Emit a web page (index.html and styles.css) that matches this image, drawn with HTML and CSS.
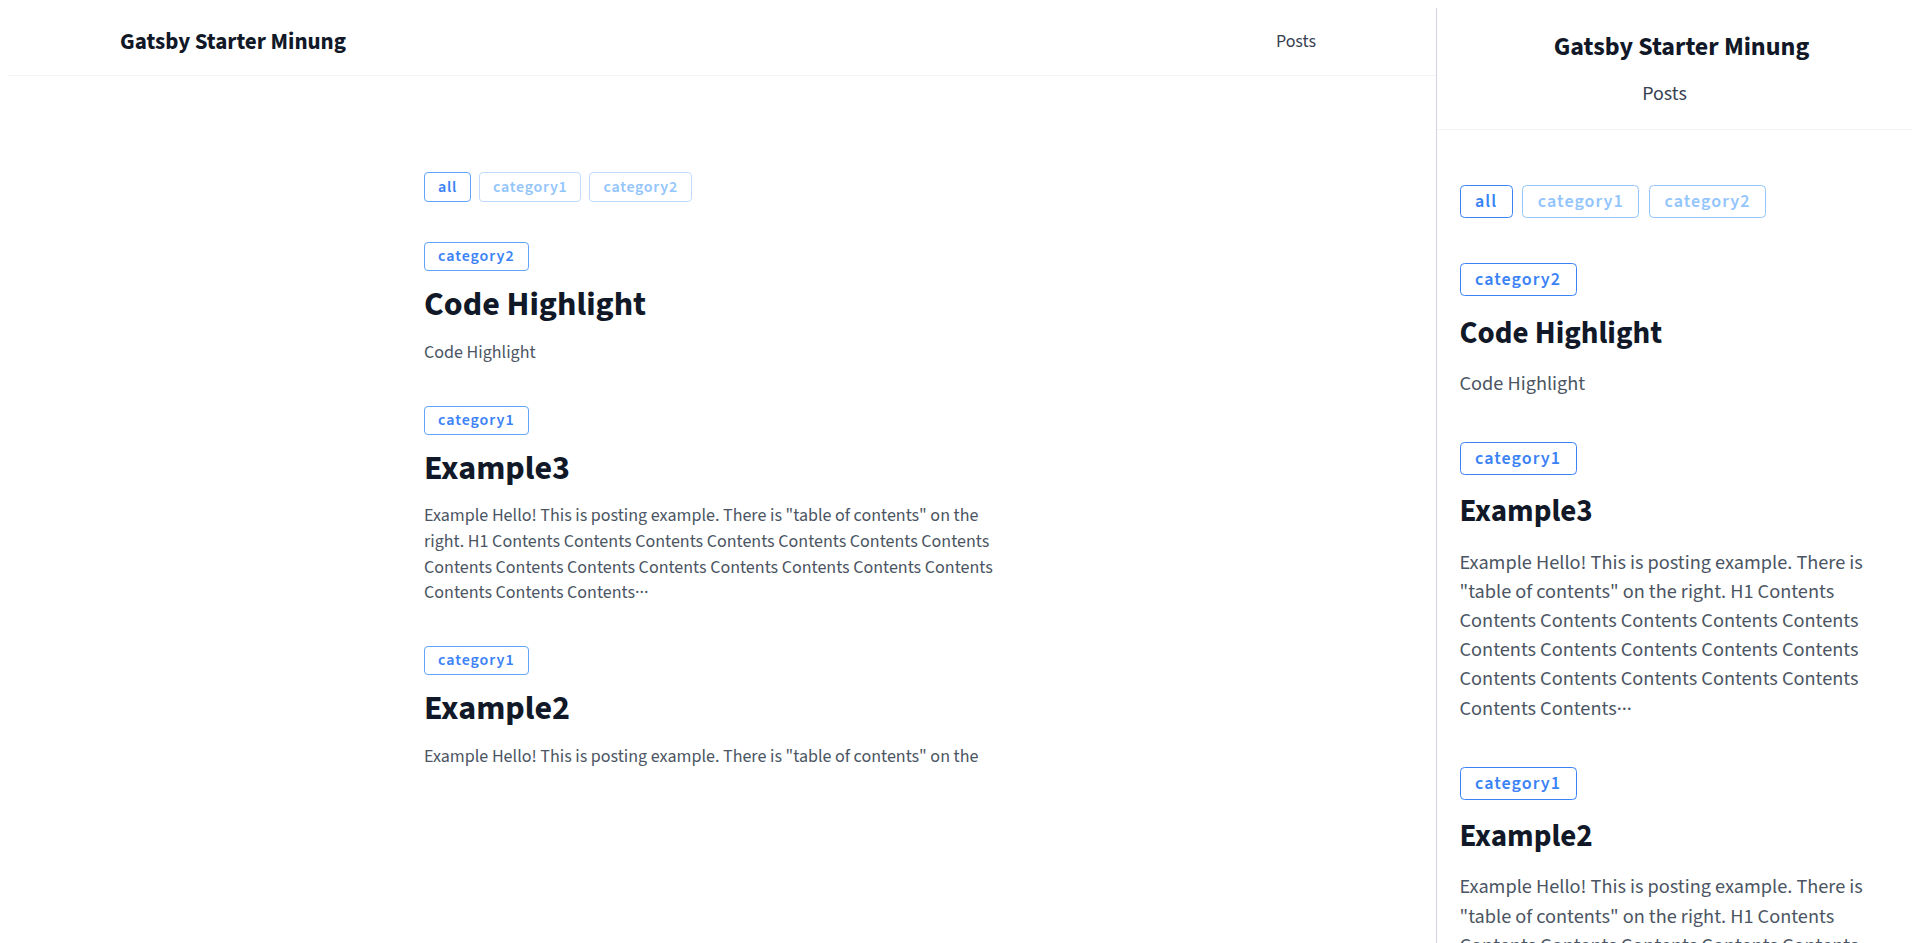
FILE: index.html
```html
<!DOCTYPE html>
<html lang="en">
<head>
<meta charset="utf-8">
<title>Gatsby Starter Minung</title>
<link rel="stylesheet" href="styles.css">
</head>
<body>
<div class="layout">
  <section class="pane pane--desktop">
    <header class="nav">
      <a class="brand" href="#">Gatsby Starter Minung</a>
      <a class="nav-link" href="#">Posts</a>
    </header>
    <main class="main">
      <div class="filters">
        <button class="chip chip--filter chip--active">all</button>
        <button class="chip chip--filter chip--idle">category1</button>
        <button class="chip chip--filter chip--idle">category2</button>
      </div>
      <ul class="posts">
        <li class="post">
          <span class="chip chip--tag">category2</span>
          <h2 class="post-title">Code Highlight</h2>
          <p class="excerpt">Code Highlight</p>
        </li>
        <li class="post">
          <span class="chip chip--tag">category1</span>
          <h2 class="post-title">Example3</h2>
          <p class="excerpt">Example Hello! This is posting example. There is "table of contents" on the right. H1 Contents Contents Contents Contents Contents Contents Contents Contents Contents Contents Contents Contents Contents Contents Contents Contents Contents Contents···</p>
        </li>
        <li class="post">
          <span class="chip chip--tag">category1</span>
          <h2 class="post-title">Example2</h2>
          <p class="excerpt">Example Hello! This is posting example. There is "table of contents" on the right. H1 Contents Contents Contents Contents Contents Contents Contents Contents Contents Contents Contents Contents Contents Contents Contents Contents Contents Contents···</p>
        </li>
      </ul>
    </main>
  </section>

  <section class="pane pane--mobile">
    <header class="m-nav">
      <a class="m-brand" href="#">Gatsby Starter Minung</a>
      <a class="m-nav-link" href="#">Posts</a>
    </header>
    <main class="m-main">
      <div class="m-filters">
        <button class="m-chip chip--active">all</button>
        <button class="m-chip chip--idle">category1</button>
        <button class="m-chip chip--idle">category2</button>
      </div>
      <ul class="m-posts">
        <li class="m-post">
          <span class="m-chip chip--tag">category2</span>
          <h2 class="m-post-title">Code Highlight</h2>
          <p class="m-excerpt">Code Highlight</p>
        </li>
        <li class="m-post">
          <span class="m-chip chip--tag">category1</span>
          <h2 class="m-post-title">Example3</h2>
          <p class="m-excerpt">Example Hello! This is posting example. There is "table of contents" on the right. H1 Contents Contents Contents Contents Contents Contents Contents Contents Contents Contents Contents Contents Contents Contents Contents Contents Contents Contents···</p>
        </li>
        <li class="m-post">
          <span class="m-chip chip--tag">category1</span>
          <h2 class="m-post-title">Example2</h2>
          <p class="m-excerpt">Example Hello! This is posting example. There is "table of contents" on the right. H1 Contents Contents Contents Contents Contents Contents Contents Contents Contents Contents Contents Contents Contents Contents Contents Contents Contents Contents···</p>
        </li>
      </ul>
    </main>
  </section>
</div>
</body>
</html>
```
FILE: styles.css
```css
html, body {
  background: #ffffff;
}
body {
  margin: 8px 8px 0 8px;
  font-family: "Source Sans 3", "Source Sans Pro", "Noto Sans", sans-serif;
  color: #4b5563;
  overflow: hidden;
}
a { text-decoration: none; color: inherit; }
ul { list-style: none; margin: 0; padding: 0; }
h2, p { margin: 0; }
button { font-family: inherit; background: #fff; cursor: pointer; }

.layout {
  display: flex;
  align-items: flex-start;
  height: calc(100vh - 8px);
}

/* ---------- desktop pane ---------- */
.pane--desktop {
  flex: 1 1 auto;
  min-width: 0;
  height: 760px;
  overflow: hidden;
}
.nav {
  height: 67px;
  display: flex;
  align-items: center;
  justify-content: space-between;
  padding: 0 120px 0 112px;
  border-bottom: 1px solid #f3f4f6;
}
.brand {
  font-size: 23px;
  font-weight: 700;
  color: #111827;
  line-height: 28px;
}
.nav-link {
  font-size: 18px;
  color: #374151;
  line-height: 24px;
}
.main {
  max-width: 596px;
  margin: 0 auto;
  padding-top: 96px;
}
.filters {
  display: flex;
  gap: 8px;
  margin-bottom: 40px;
}
.chip {
  display: inline-block;
  font-size: 16px;
  font-weight: 600;
  letter-spacing: 0.06em;
  line-height: 22px;
  padding: 3px 13px;
  border: 1px solid;
  border-radius: 4px;
}
.chip--filter { letter-spacing: 0.045em; }
.chip--tag { line-height: 21px; }
.chip--active { color: #3b82f6; border-color: #60a5fa; }
.chip--idle { color: #93c5fd; border-color: #bfdbfe; }
.chip--tag { color: #3b82f6; border-color: #60a5fa; }

.post { margin-bottom: 40px; }
.post-title {
  margin: 14px 0;
  font-size: 34px;
  line-height: 1.2;
  font-weight: 700;
  color: #111827;
}
.excerpt {
  font-size: 18px;
  line-height: 25.7px;
  color: #4b5563;
}

/* ---------- mobile pane ---------- */
.pane--mobile {
  flex: 0 0 475px;
  height: 100%;
  border-left: 1px solid #d1d5db;
  overflow: hidden;
}
.m-nav {
  display: flex;
  flex-direction: column;
  align-items: center;
  padding: 23px 0 21px;
  gap: 17px;
  border-bottom: 1px solid #f3f4f6;
}
.m-brand {
  font-size: 26px;
  font-weight: 700;
  color: #111827;
  line-height: 32px;
  padding-left: 14px;
}
.m-nav-link {
  font-size: 20px;
  color: #374151;
  line-height: 28px;
  margin-right: 20px;
}
.m-main {
  padding: 55px 22.5px 0;
}
.m-filters {
  display: flex;
  gap: 9.5px;
  margin-bottom: 45px;
}
.m-chip {
  display: inline-block;
  font-size: 18px;
  font-weight: 600;
  letter-spacing: 0.06em;
  line-height: 23px;
  padding: 4px 14.5px;
  border: 1px solid;
  border-radius: 4.5px;
}
.m-post { margin-bottom: 44px; }
.m-post-title {
  margin: 18.5px 0 17px;
  font-size: 31px;
  line-height: 1.2;
  font-weight: 700;
  color: #111827;
}
.m-excerpt {
  font-size: 20.3px;
  line-height: 29.2px;
  color: #4b5563;
}
```
